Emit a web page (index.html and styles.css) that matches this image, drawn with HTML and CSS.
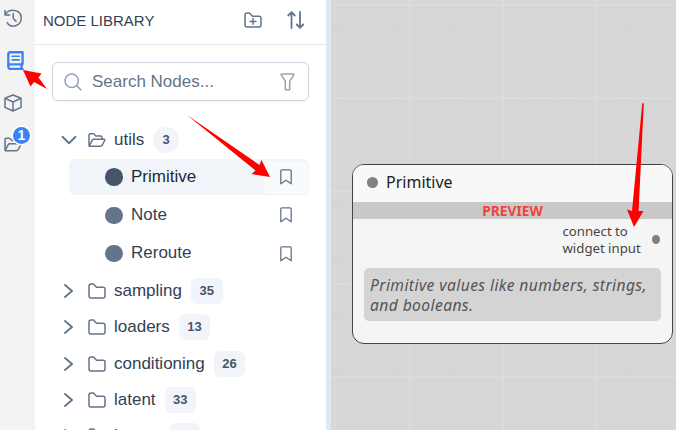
FILE: index.html
```html
<!DOCTYPE html>
<html lang="en">
<head>
<meta charset="utf-8">
<title>Node Library</title>
<link rel="stylesheet" href="styles.css">
</head>
<body>
<svg class="defs" width="0" height="0" aria-hidden="true">
  <symbol id="folder" viewBox="0 0 18 16"><path d="M1 13V3Q1 1 3 1H5.5L8.5 4.2H15Q17 4.2 17 6.2V13Q17 15 15 15H3Q1 15 1 13Z"/></symbol>
  <symbol id="folder-open" viewBox="0 0 18 15"><path d="M1 13V2.5Q1 1.2 2.3 1.2H5.5L8 3.5H12.5Q14 3.5 14 5V6.8M1.2 13.5L4.3 7.6Q4.7 6.8 5.6 6.8H16Q17.3 6.8 16.7 8L14.2 12.7Q13.6 13.7 12.6 13.7H1.4"/></symbol>
  <symbol id="right" viewBox="0 0 10 16"><path d="M2 2L9 8L2 14"/></symbol>
  <symbol id="bookmark" viewBox="0 0 12 16"><path d="M.8 14.8V2Q.8.8 2 .8H10Q11.2.8 11.2 2V14.8L6 11.2Z"/></symbol>
</svg>
<div class="app">
  <nav class="rail">
    <svg class="history" viewBox="0 0 18 18"><path d="M1 1.5V6H5.7M1.3 5.7C5 -1 17.2.2 17.2 9C17.2 17.4 6.5 19.7 3.2 13.6M9.2 4.6V9.3L12 12.2"/></svg>
    <svg class="book" viewBox="0 0 16 18"><path d="M14.7 1.2H3.2Q1.2 1.2 1.2 3.2V15Q1.2 17 3.2 17H14.7M1.3 13.7Q1.8 12.6 3 12.6H14.7V1.2M13.8 12.6V17"/><path class="lines" d="M4.8 5H11.5M4.8 8.4H11.5"/></svg>
    <svg class="cube" viewBox="0 0 18 18"><path d="M9 1L17 4.3V13.4L9 17L1 13.4V4.3ZM1.2 4.4L9 8L16.8 4.4M9 8V17"/></svg>
    <div class="workflows">
      <svg viewBox="0 0 18 15"><use href="#folder-open"/></svg>
      <span class="count">1</span>
    </div>
  </nav>
  <section class="panel">
    <header class="head">
      <span class="heading">NODE LIBRARY</span>
      <svg class="add" viewBox="0 0 18 16"><use href="#folder"/><path d="M9 6.5V12.3M6.1 9.4H11.9"/></svg>
      <svg class="sort" viewBox="0 0 18 18"><path d="M4.5 17V1.5M1.3 4.5L4.5 1.2L7.7 4.5M13 1V16.5M9.8 13.5L13 16.8L16.2 13.5"/></svg>
    </header>
    <div class="search">
      <svg class="lens" viewBox="0 0 18 18"><circle cx="7.7" cy="7.7" r="6.7"/><path d="M12.6 12.6L17 17"/></svg>
      <span class="hint">Search Nodes...</span>
      <svg class="filter" viewBox="0 0 15 18"><path d="M2 1H13Q14.5 1 13.6 2.4L9.7 8V16.8H5.3V8L1.4 2.4Q.5 1 2 1Z"/></svg>
    </div>
    <div class="tree">
      <div class="row open"><svg class="down" viewBox="0 0 16 10"><path d="M1.5 1.8L8 8.2L14.5 1.8"/></svg><svg class="fold" viewBox="0 0 18 15"><use href="#folder-open"/></svg><span>utils</span><b class="tag round">3</b></div>
      <div class="leaf active"><i class="dot"></i><span>Primitive</span><div class="mark"><svg viewBox="0 0 12 16"><use href="#bookmark"/></svg></div></div>
      <div class="leaf"><i class="dot"></i><span>Note</span><div class="mark"><svg viewBox="0 0 12 16"><use href="#bookmark"/></svg></div></div>
      <div class="leaf"><i class="dot"></i><span>Reroute</span><div class="mark"><svg viewBox="0 0 12 16"><use href="#bookmark"/></svg></div></div>
      <div class="row"><svg class="right" viewBox="0 0 10 16"><use href="#right"/></svg><svg class="fold" viewBox="0 0 18 16"><use href="#folder"/></svg><span>sampling</span><b class="tag">35</b></div>
      <div class="row"><svg class="right" viewBox="0 0 10 16"><use href="#right"/></svg><svg class="fold" viewBox="0 0 18 16"><use href="#folder"/></svg><span>loaders</span><b class="tag">13</b></div>
      <div class="row"><svg class="right" viewBox="0 0 10 16"><use href="#right"/></svg><svg class="fold" viewBox="0 0 18 16"><use href="#folder"/></svg><span>conditioning</span><b class="tag">26</b></div>
      <div class="row"><svg class="right" viewBox="0 0 10 16"><use href="#right"/></svg><svg class="fold" viewBox="0 0 18 16"><use href="#folder"/></svg><span>latent</span><b class="tag">33</b></div>
      <div class="row"><svg class="right" viewBox="0 0 10 16"><use href="#right"/></svg><svg class="fold" viewBox="0 0 18 16"><use href="#folder"/></svg><span>image</span><b class="tag"></b></div>
    </div>
  </section>
  <div class="splitter"></div>
  <main class="canvas">
    <article class="node">
      <div class="title"><i></i><span>Primitive</span></div>
      <div class="preview"><span>PREVIEW</span></div>
      <div class="slot"><p>connect to<br>widget input</p><i></i></div>
      <div class="about">Primitive values like numbers, strings,<br>and booleans.</div>
    </article>
  </main>
</div>
<svg class="arrows" viewBox="0 0 676 430"><path d="M23 70L41.5 73.5L38.5 77.5L47 89L34 82L30.5 86.5ZM187 115L259.5 165L261.5 160L270 177L251.5 174L255.5 170.5ZM642.3 103L643.8 103.5L638.6 211L643.5 211L634 227L627 209.5L632 211Z"/></svg>
</body>
</html>
```

FILE: styles.css
```css
* { box-sizing: border-box; }
body { margin: 0; overflow: hidden; font-family: "Liberation Sans", Arial, sans-serif; color: #334155; }
svg { display: block; flex: none; fill: none; stroke: #64748b; stroke-width: 1.5; stroke-linecap: round; stroke-linejoin: round; }
.defs { position: absolute; }
.app { display: flex; width: 676px; height: 430px; overflow: hidden; }

.rail { width: 35px; flex: none; background: #f3f3f3; padding: 9px 0 0 4px; }
.history { width: 18px; height: 18px; }
.book { width: 17px; height: 19px; margin: 24px 0 0 2.5px; stroke: #3b82f6; stroke-width: 2.2; }
.book .lines { stroke-width: 1.6; }
.cube { width: 18px; height: 18px; margin-top: 24px; }
.workflows { position: relative; width: 18px; margin-top: 16px; padding-top: 9px; }
.workflows svg { width: 18px; height: 15px; }
.count { position: absolute; left: 9px; top: -1px; width: 17px; height: 17px; border-radius: 50%; background: #3b82f6; box-shadow: 0 0 0 1.5px #fff; color: #fff; font: bold 14px/17px "Liberation Sans", sans-serif; text-align: center; }

.panel { width: 291px; flex: none; background: #fff; }
.head { display: flex; align-items: center; height: 45px; padding: 0 21px 4px 8px; border-bottom: 1px solid #dfe7ef; }
.heading { flex: 1; padding-top: 1px; font-size: 15px; }
.add { width: 18px; height: 16px; margin-right: 25px; }
.sort { width: 18px; height: 18px; stroke-width: 1.8; }
.search { display: flex; align-items: center; height: 39px; margin: 17px 17px 0; padding: 0 13px 0 11px; border: 1px solid #cbd5e1; border-radius: 6px; box-shadow: 0 1px 2px rgba(18, 18, 23, .05); }
.lens { width: 18px; height: 18px; stroke: #94a3b8; }
.hint { flex: 1; padding-left: 10px; font-size: 17px; color: #64748b; }
.filter { width: 15px; height: 18px; stroke: #94a3b8; }

.tree { padding-top: 20px; font-size: 17px; }
.row { display: flex; align-items: center; height: 36.3px; padding-left: 28px; }
.row.open { height: 38px; padding-left: 26px; }
.leaf + .row { margin-top: -1px; }
.right { width: 10px; height: 16px; margin-right: 15px; stroke-width: 1.9; }
.down { width: 16px; height: 10px; margin-right: 11px; stroke-width: 1.9; }
.fold { width: 18px; height: 16px; margin-right: 8px; }
.tag { height: 26px; min-width: 26px; margin-left: 9px; padding: 0 8.5px; border-radius: 6px; background: #f1f5f9; color: #475569; font-size: 13px; line-height: 26px; text-align: center; }
.tag:empty { width: 31px; }
.tag.round { border-radius: 13px; }
.leaf { display: flex; align-items: center; height: 36px; margin: 0 17px 2.3px 34px; padding: 1px 1px 1px 36px; border-radius: 6px; }
.leaf > span { flex: 1; padding: 0 0 1px 9px; }
.dot { width: 17.5px; height: 17.5px; margin-right: -.5px; border-radius: 50%; background: #64748b; }
.active { background: #f1f5f9; color: #1e293b; }
.active .dot { background: #475569; }
.mark { display: flex; align-items: center; justify-content: center; width: 44px; height: 33px; border-radius: 6px; }
.mark svg { width: 12px; height: 16px; margin-right: 1px; stroke-width: 1.3; }
.active .mark { background: #f8fafc; }

.splitter { width: 5px; flex: none; background: #dfe7ef; }
.canvas {
  flex: 1; padding: 164px 0 0 21px; font-family: "Noto Sans", sans-serif;
  background-color: #d6d6d6;
  background-image: linear-gradient(90deg, #dbdbdb 2px, transparent 2px), linear-gradient(#dbdbdb 2px, transparent 2px), linear-gradient(90deg, #d9d9d9 1px, transparent 1px), linear-gradient(#d9d9d9 1px, transparent 1px);
  background-size: 93px 93px, 93px 93px, 9.3px 9.3px, 9.3px 9.3px;
  background-position: 78px 0, 0 4px, 4px 0, 0 4px;
}
.node { width: 321px; height: 180px; border: 1px solid #444; border-radius: 12px; background: #f5f5f5; overflow: hidden; }
.title { display: flex; align-items: center; height: 37px; padding: 0 0 2px 14px; background: #f8f8f8; font-size: 16px; color: #222; }
.title span { margin-top: -2px; }
.title i { width: 11px; height: 11px; margin-right: 8px; border-radius: 50%; background: #808080; }
.preview { height: 17px; background: #c9c9c9; color: #f44336; font-size: 13.8px; font-weight: bold; line-height: 17px; text-align: center; }
.slot { display: flex; align-items: center; height: 49px; padding: 0 12px 9px 209.5px; font-size: 13.2px; line-height: 17px; color: #444; }
.slot p { flex: 1; margin: 0; padding-top: 1px; white-space: nowrap; }
.slot i { width: 8px; height: 9px; border-radius: 50%; background: #808080; }
.about { height: 53px; margin: 0 11px; padding: 7px 0 0 6px; border-radius: 5px; background: #d4d4d4; color: #555; font-size: 15.6px; font-style: italic; letter-spacing: .42px; line-height: 20px; white-space: nowrap; }
.arrows { position: absolute; left: 0; top: 0; width: 676px; height: 430px; fill: #f00; stroke: none; pointer-events: none; }
```
